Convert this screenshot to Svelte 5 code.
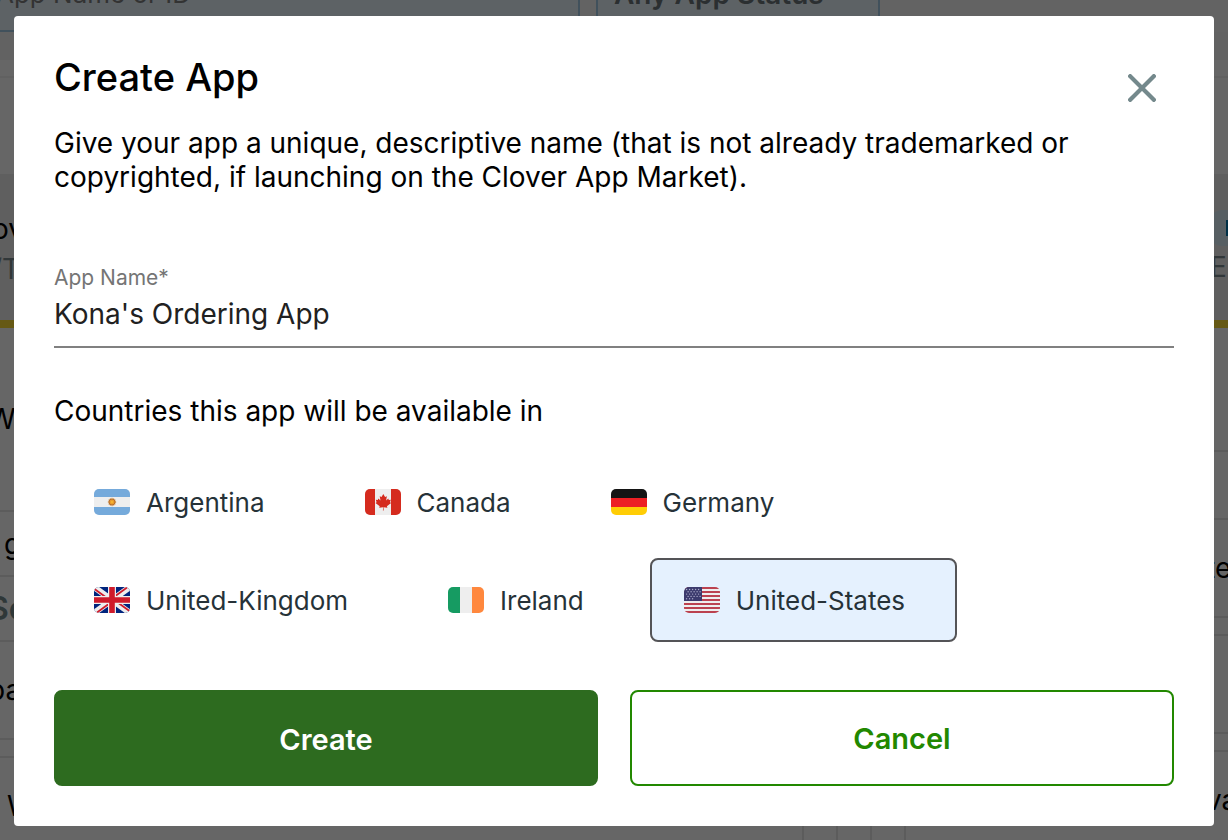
<script>
  let name = $state("Kona's Ordering App");
  let open = $state(true);
  let countries = $state([
    { id: 'ar', label: 'Argentina', selected: false },
    { id: 'ca', label: 'Canada', selected: false },
    { id: 'de', label: 'Germany', selected: false },
    { id: 'gb', label: 'United-Kingdom', selected: false },
    { id: 'ie', label: 'Ireland', selected: false },
    { id: 'us', label: 'United-States', selected: true }
  ]);
  const stars = Array.from({ length: 23 }, (_, i) => ({
    x: 2.6 + (i % 5) * 3 + (Math.floor(i / 5) % 2) * 1.5,
    y: 2.5 + Math.floor(i / 5) * 2.3
  }));
</script>

<div class="page" aria-hidden="true">
  <div class="filters">
    <div class="filter search">App Name or ID</div>
    <div class="filter status">Any App Status</div>
  </div>
  <div class="strip"></div>
  <div class="gap"></div>
  <div class="summary"></div>
  <div class="banner">
    <div class="side"><span>ov</span><span class="muted">/T</span></div>
    <div class="side end"><i class="pill"></i><span class="muted">E</span></div>
  </div>
  <div class="columns">
    <div class="column">
      <div class="cell tall">W</div>
      <div class="cell thin">g</div>
      <div class="cell thin bold">Sc</div>
      <div class="cell">pa</div>
      <div class="spacer"></div>
      <div class="cell indent">W</div>
    </div>
    <div class="column right">
      <div class="cell head"></div>
      <div class="cell thin"></div>
      <div class="cell">te</div>
      <div class="spacer"></div>
      <div class="cell"></div>
      <div class="spacer"></div>
      <div class="cell">va</div>
    </div>
  </div>
  <div class="footer"><i></i><i></i><i></i><i></i></div>
</div>

{#if open}
  <div class="overlay">
    <div class="dialog" role="dialog" aria-modal="true" aria-labelledby="title">
      <header>
        <h1 id="title">Create App</h1>
        <button class="close" aria-label="Close" onclick={() => (open = false)}>
          <svg viewBox="0 0 28 28" width="28" height="28">
            <path d="M2.2 2.2 25.8 25.8M25.8 2.2 2.2 25.8" stroke="#74898c" stroke-width="4.2" stroke-linecap="square" />
          </svg>
        </button>
      </header>
      <p class="intro">
        Give your app a unique, descriptive name (that is not already trademarked or copyrighted, if
        launching on the Clover App Market).
      </p>
      <div class="field">
        <label for="app-name">App Name*</label>
        <input id="app-name" type="text" bind:value={name} />
      </div>
      <h2 id="countries">Countries this app will be available in</h2>
      <div class="countries" role="group" aria-labelledby="countries">
        {#each countries as c (c.id)}
          <button
            class="country"
            class:selected={c.selected}
            aria-pressed={c.selected}
            onclick={() => (c.selected = !c.selected)}
          >
            <svg class="flag" viewBox="0 0 36 26" aria-hidden="true">
              {#if c.id === 'ar'}
                <path fill="#eee" d="M0 0h36v26H0z" />
                <path fill="#75aadb" d="M0 0h36v8H0zM0 18h36v8H0z" />
                <circle cx="18" cy="13" r="3.6" fill="none" stroke="#d4a873" stroke-width="1.2" stroke-dasharray="1.1 .5" />
                <circle cx="18" cy="13" r="3" fill="#e69a2e" stroke="#b96e2b" />
                <circle cx="18" cy="13" r="1.3" fill="#f4b32f" />
              {:else if c.id === 'ca'}
                <path fill="#eee" d="M0 0h36v26H0z" />
                <path fill="#d52b1e" d="M0 0h10v26H0zM26 0h10v26H26z" />
                <path
                  fill="#d52b1e"
                  d="m18.3 5-1.8 3-1.8-.7.8 4.3-2.2-2-.5 1.3-2-.2.8 2.5-1.1.7 4.2 3.4-.5 1.5 3.9-.6-.2 3.2h.8l-.2-3.2 3.9.6-.5-1.5 4.2-3.4-1.1-.7.8-2.5-2 .2-.5-1.3-2.2 2 .8-4.3-1.8.7z"
                />
              {:else if c.id === 'de'}
                <path fill="#141414" d="M0 0h36v9H0z" />
                <path fill="#ed1f24" d="M0 9h36v9H0z" />
                <path fill="#ffcd05" d="M0 18h36v8H0z" />
              {:else if c.id === 'gb'}
                <path fill="#00247d" d="M0 0h36v26H0z" />
                <path stroke="#eee" stroke-width="6" d="m0 0 36 26M36 0 0 26" />
                <path stroke="#cf1b2b" stroke-width="1.8" d="M-1 1 14 11.8M37 25 22 14.2M33 .5 20 10M3 25.5 16 16" />
                <path stroke="#eee" stroke-width="8" d="M18 0v26M0 13h36" />
                <path stroke="#cf1b2b" stroke-width="5.6" d="M18 0v26M0 13h36" />
              {:else if c.id === 'ie'}
                <path fill="#169b62" d="M0 0h12v26H0z" />
                <path fill="#eee" d="M12 0h12v26H12z" />
                <path fill="#ff883e" d="M24 0h12v26H24z" />
              {:else}
                <path fill="#eee" d="M0 0h36v26H0z" />
                <path stroke="#b22334" stroke-opacity=".85" stroke-width="2" d="M0 1h36M0 5h36M0 9h36M0 13h36M0 17h36M0 21h36M0 25h36" />
                <path fill="#3c3b6e" d="M0 0h18v14H0z" />
                {#each stars as s}
                  <circle cx={s.x} cy={s.y} r=".7" fill="#a9a8c8" />
                {/each}
              {/if}
            </svg>
            {c.label}
          </button>
        {/each}
      </div>
      <div class="actions">
        <button class="primary">Create</button>
        <button class="secondary" onclick={() => (open = false)}>Cancel</button>
      </div>
    </div>
  </div>
{/if}

<style>
  :global(body) {
    margin: 0;
    font-family: Inter, 'Liberation Sans', sans-serif;
    background: #fff;
  }
  * {
    box-sizing: border-box;
  }
  button,
  input {
    font: inherit;
  }
  button {
    cursor: pointer;
  }
  .page {
    display: flex;
    flex-direction: column;
    height: 100vh;
    overflow: hidden;
    font-size: 28px;
  }
  .page > * {
    flex-shrink: 0;
  }
  .filters {
    display: flex;
    gap: 16px;
    height: 32px;
    background: #f8f8f8;
  }
  .filter {
    display: flex;
    align-items: flex-end;
    padding: 0 16px 20px;
    white-space: nowrap;
    line-height: 32px;
    background: #e8f5fc;
    border: 2px solid #a3cbe6;
    border-top: 0;
    color: #808080;
  }
  .search {
    width: 580px;
    padding-left: 0;
    border-left: 0;
    font-size: 26px;
    text-indent: -4px;
  }
  .status {
    width: 284px;
    font-weight: 600;
    color: #6d757a;
  }
  .strip {
    height: 28px;
    background: #f5f5f5;
  }
  .gap {
    height: 18px;
    border-bottom: 2px solid #f3f3f3;
  }
  .summary {
    height: 96px;
  }
  .banner {
    display: flex;
    justify-content: space-between;
    height: 154px;
    padding-top: 36px;
    background: #ededed;
    border-bottom: 8px solid #ffdf35;
  }
  .side {
    display: flex;
    flex-direction: column;
    gap: 2px;
    width: 24px;
    margin-left: -8px;
    line-height: 38px;
  }
  .end {
    width: 18px;
  }
  .muted {
    color: #7a8a90;
  }
  .pill {
    width: 32px;
    height: 36px;
    border-radius: 12px;
    background: linear-gradient(#0079b0, #0079b0) 16px center / 8px 16px no-repeat #d9edf8;
  }
  .columns {
    display: flex;
    justify-content: space-between;
    flex: 1;
    min-height: 0;
    overflow: hidden;
  }
  .column {
    width: 24px;
    overflow: hidden;
  }
  .right {
    width: 20px;
  }
  .cell {
    display: flex;
    align-items: center;
    height: 100px;
    border-top: 2px solid #e6e6e6;
    border-bottom: 2px solid #e6e6e6;
    text-indent: -12px;
  }
  .right .cell {
    text-indent: -2px;
  }
  .tall {
    height: 182px;
    border: 0;
  }
  .thin {
    height: 65px;
    border-bottom: 0;
  }
  .thin:not(.bold) {
    text-indent: 4px;
  }
  .head {
    height: 122px;
    border: 0;
  }
  .right .thin {
    height: 68px;
  }
  .bold {
    font-weight: 600;
    font-size: 32px;
    color: #74898c;
  }
  .indent {
    text-indent: 7px;
  }
  .spacer {
    height: 16px;
  }
  .footer {
    display: flex;
    gap: 32px;
    justify-content: center;
    height: 14px;
    padding-left: 480px;
  }
  .footer i {
    width: 2px;
    background: #e6e6e6;
  }
  .overlay {
    position: fixed;
    inset: 0;
    padding: 16px 14px 14px;
    background: rgba(0, 0, 0, 0.6);
    overflow: auto;
  }
  .dialog {
    padding: 40px;
    border-radius: 4px;
    background: #fff;
    color: #000;
  }
  header {
    display: flex;
    justify-content: space-between;
    align-items: flex-start;
    height: 42px;
  }
  h1 {
    margin: 0;
    font-size: 38px;
    font-weight: 500;
    line-height: 42px;
  }
  .close {
    display: flex;
    margin: 18px 18px 0 0;
    padding: 0;
    border: 0;
    background: none;
  }
  .intro {
    margin: 28px 0 72px;
    font-size: 28px;
    line-height: 34px;
  }
  .field {
    display: flex;
    flex-direction: column;
  }
  label {
    font-size: 21px;
    line-height: 24px;
    color: #757575;
  }
  input {
    width: 100%;
    height: 58px;
    padding: 0 0 8px;
    border: 0;
    border-bottom: 2px solid #808080;
    outline: 0;
    background: none;
    font-size: 28px;
    color: #212121;
  }
  h2 {
    margin: 46px 0 32px;
    font-size: 28px;
    font-weight: 400;
    line-height: 34px;
  }
  .countries {
    display: flex;
    flex-wrap: wrap;
    gap: 14px;
    padding: 0 40px 0 6px;
  }
  .country {
    display: flex;
    align-items: center;
    gap: 16px;
    height: 84px;
    padding: 0 50px 0 32px;
    border: 2px solid transparent;
    border-radius: 8px;
    background: none;
    font-size: 26px;
    color: #263238;
  }
  .selected {
    border-color: #545457;
    background: #e5f1fe;
  }
  .flag {
    width: 36px;
    height: 26px;
    border-radius: 5px;
  }
  .actions {
    display: grid;
    grid-template-columns: 1fr 1fr;
    gap: 32px;
    margin-top: 48px;
  }
  .actions button {
    height: 96px;
    border: 2px solid #228800;
    border-radius: 8px;
    font-size: 29px;
    font-weight: 600;
  }
  .actions .primary {
    padding-top: 4px;
    border-color: #2d6b1f;
    background: #2d6b1f;
    color: #fff;
  }
  .actions .secondary {
    background: #fff;
    color: #228800;
  }
</style>
